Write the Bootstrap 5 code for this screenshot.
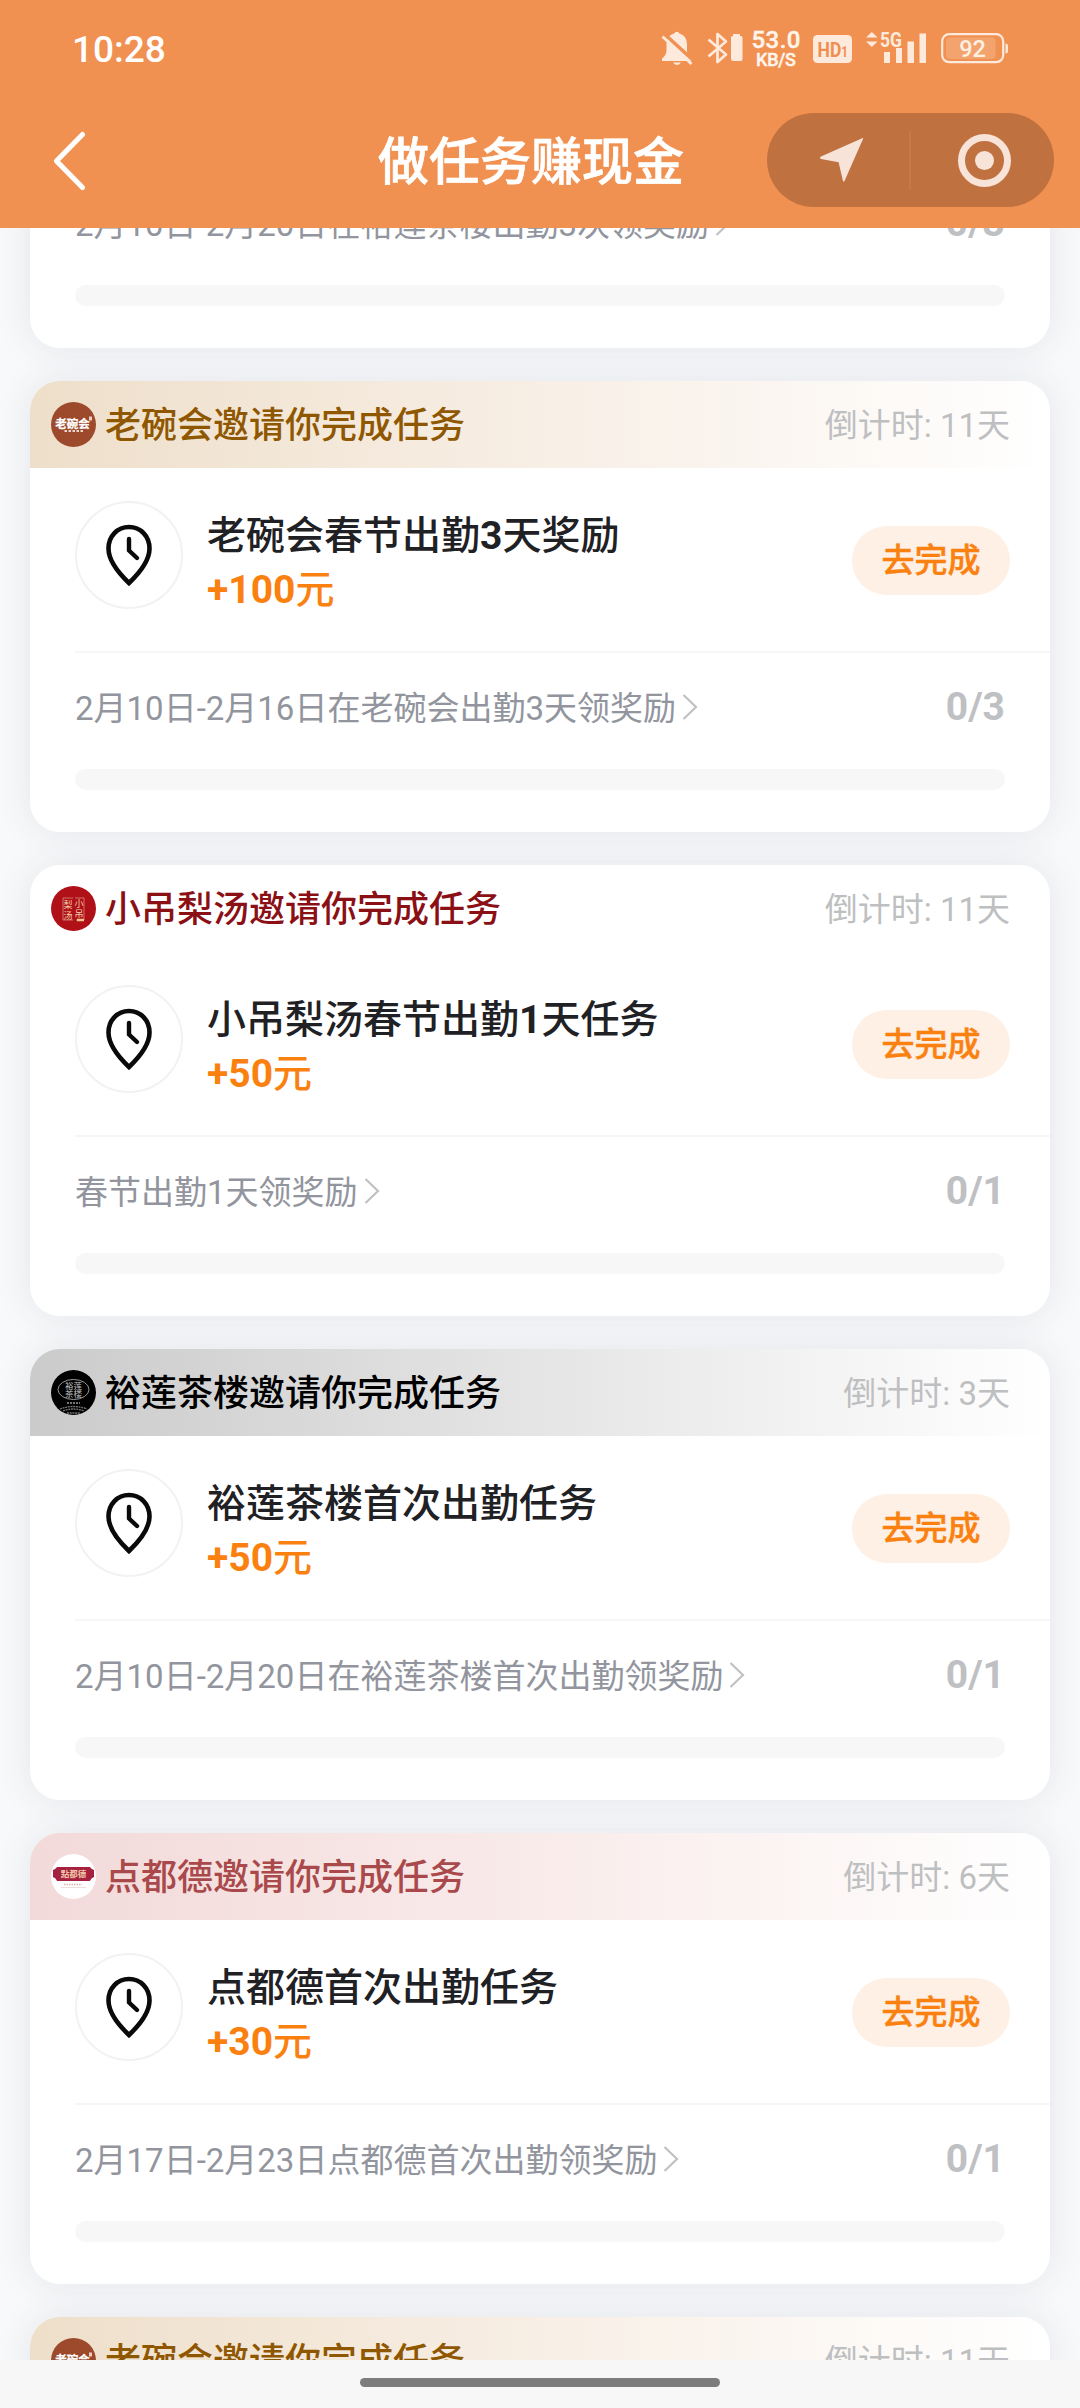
<!DOCTYPE html>
<html lang="zh-CN">
<head>
<meta charset="utf-8">
<meta name="viewport" content="width=device-width, initial-scale=1">
<title>做任务赚现金</title>
<link href="https://cdn.jsdelivr.net/npm/bootstrap@5.3.0/dist/css/bootstrap.min.css" rel="stylesheet">
<style>
  html, body { height: 2408px; overflow: hidden; }
  body { width: 1080px; font-family: Roboto, "Noto Sans CJK SC", sans-serif; background: #f8f9fa; color: #1f2124; }
  svg { display: block; flex: none; overflow: visible; }
  .top-area { height: 228px; background: #f19151; color: #fff; z-index: 2; }
  .status-row { height: 96px; padding: 0 71px 0 72px; }
  .clock { font-size: 37px; font-weight: 500; line-height: 1; padding-top: 2px; }
  .title-row { height: 132px; padding: 0 26px 4px 52px; }
  .page-title { font-size: 51px; font-weight: 500; line-height: 72px; margin: 5px 83px 0 auto; -webkit-text-stroke: .7px #fff; }
  .capsule { width: 287px; height: 94px; border-radius: 47px; background: #c07140; }
  .feed { height: 2132px; }
  .task-list { margin-top: -331px; padding: 0 30px; gap: 33px; }
  .task { flex: none; height: 451px; border-radius: 30px; background: #fff; box-shadow: 0 0 36px rgba(50, 60, 95, .1); }
  .task-in { border-radius: 30px; overflow: hidden; height: 451px; }
  .brand-bar { height: 87px; padding: 0 40px 0 21px; }
  .brand-name { font-size: 36px; font-weight: 500; margin: 3px 0 0 9px; line-height: 87px; }
  .countdown { font-size: 33px; color: #bebfc1; line-height: 87px; margin-top: 2px; }
  .gold { background: linear-gradient(90deg, #eedfca, #f8efe6 52%, #fff); color: #8f5700; }
  .wine { color: #8b1016; }
  .ink { background: linear-gradient(90deg, #cbcbcb, #fff); color: #000; }
  .rose { background: linear-gradient(90deg, #f2dad9, #f9eceb 52%, #fff); color: #a9494b; }
  .task-main { height: 183px; padding: 33px 40px 0 45px; }
  .pin-ring { width: 108px; height: 108px; border: 2px solid #f2f2f3; border-radius: 50%; flex: none; }
  .task-text { margin: 8px 0 0 24px; font-size: 39px; line-height: 54px; font-weight: 500; }
  .task-text b, .reward { font-weight: 700; }
  .reward { color: #fa8110; }
  .reward span { font-weight: 500; }
  .go-btn { width: 158px; height: 69px; margin-top: 25px; border-radius: 35px; background: #fef0e4; color: #fa8110; font-size: 33px; font-weight: 500; line-height: 66px; padding: 0; border: 0; -webkit-text-stroke: .4px #fa8110; }
  .task-more { margin-left: 45px; border-top: 2px solid #f6f6f7; padding-right: 45px; }
  .rule-row { height: 116px; }
  .rule { font-size: 33px; color: #92959d; height: 112px; }
  .rule svg { margin: 0 0 4px 6px; }
  .count { font-size: 39px; font-weight: 700; color: #bfc0c3; line-height: 108px; }
  .meter { height: 21px; border-radius: 11px; background: #f7f7f8; }
  .home-area { height: 48px; background: #f7f7f7; padding-top: 18px; z-index: 2; }
  .home-bar { width: 360px; height: 9px; border-radius: 5px; background: #7d7d7d; }
</style>
</head>
<body>
<svg width="0" height="0" class="position-absolute">
  <defs>
    <symbol id="pin" viewBox="0 0 46 62">
      <path d="M23 3C11.500 3 2.500 12 2.500 24.500C2.500 37 12 48.500 23 59C34 48.500 43.500 37 43.500 24.500C43.500 12 34.500 3 23 3Z" fill="none" stroke="#0a0a0a" stroke-width="4.600"/>
      <path d="M23 15V26.500L31 34" fill="none" stroke="#0a0a0a" stroke-width="4.400" stroke-linecap="round" stroke-linejoin="round"/>
    </symbol>
    <symbol id="more" viewBox="0 0 16 28"><path d="M1.500 2L14 14L1.500 26" fill="none" stroke="#bfc1c5" stroke-width="2.200"/></symbol>
    <symbol id="logo-bowl" viewBox="0 0 45 45">
      <circle cx="22.500" cy="22.500" r="22.500" fill="#9d4a2c"/>
      <text x="21.500" y="25.500" text-anchor="middle" font-size="11.500" font-weight="700" fill="#fff" stroke="#fff" stroke-width=".25" font-family="Noto Sans CJK SC, sans-serif">老碗会</text>
      <rect x="38" y="14.500" width="3" height="4" fill="#e9cfc4"/>
      <path d="M13.500 29H32" stroke="#ecd8cf" stroke-width="2" stroke-dasharray="2.500 1.500"/>
    </symbol>
    <symbol id="logo-pear" viewBox="0 0 45 45">
      <circle cx="22.500" cy="22.500" r="22.500" fill="#b01118"/>
      <path d="M22 12H12V34H22M24 12H33V34H25" fill="none" stroke="#d98c7c" stroke-width=".8"/>
      <g font-size="9" fill="#f0cfae" font-family="Noto Sans CJK SC, sans-serif" text-anchor="middle">
        <text x="17" y="22">梨</text><text x="17" y="33">汤</text><text x="28" y="21">小</text><text x="28" y="31">吊</text>
      </g>
      <path d="M26 34H33" stroke="#f0c48c" stroke-width="2.500"/>
    </symbol>
    <symbol id="logo-tea" viewBox="0 0 45 45">
      <circle cx="22.500" cy="22.500" r="22.500" fill="#000"/>
      <ellipse cx="22.500" cy="19.500" rx="15.500" ry="10" fill="none" stroke="#aaa" stroke-width=".9"/>
      <g font-size="8.500" fill="#c4c4c4" font-family="Noto Sans CJK SC, sans-serif" text-anchor="middle">
        <text x="22.500" y="18.500">裕莲</text><text x="22.500" y="26.500">茶楼</text>
      </g>
      <path d="M16 33H29" stroke="#999" stroke-width="1.500" stroke-dasharray="2 1"/>
      <path d="M9 39Q22.500 34 36 39M12 41Q22.500 37 33 41M16 43H29" fill="none" stroke="#777" stroke-width="1.300" stroke-dasharray="2 .7"/>
    </symbol>
    <symbol id="logo-dim" viewBox="0 0 45 45">
      <circle cx="22.500" cy="22.500" r="22.500" fill="#fff"/>
      <path d="M6 13H39Q40 15 43 16V23Q40 24 39 27H6Q5 24 2 23V16Q5 15 6 13Z" fill="#a5213f"/>
      <text x="22.500" y="23" text-anchor="middle" font-size="8.500" font-weight="700" fill="#f0c9a8" font-family="Noto Sans CJK SC, sans-serif">點都德</text>
      <path d="M13 30.500H31" stroke="#d9b3ab" stroke-width="1.300" stroke-dasharray="1.500 1"/>
      <path d="M10 33.500H35" stroke="#efdedb" stroke-width="1"/>
    </symbol>
  </defs>
</svg>

<div class="d-flex flex-column">
  <header class="top-area position-relative">
    <div class="status-row d-flex align-items-center">
      <div class="clock me-auto">10:28</div>
      <svg width="32" height="35" viewBox="0 0 32 35">
        <path d="M13 2.500Q16 -1 18.500 2.500Q26 5 26 13V21Q27 24.500 31 27.500V30H1V27.500Q5 25 5.500 20V12Q6 5 13 2.500Z" fill="#fdeadd"/>
        <path d="M12 31.500H20Q16 36.500 12 31.500Z" fill="#fdeadd"/>
        <path d="M3.500 3L33.500 30.500" stroke="#f19151" stroke-width="3.500"/>
        <path d="M1.500 5.500L30.500 33" stroke="#fdeadd" stroke-width="2.700"/>
      </svg>
      <svg width="36" height="34" viewBox="0 0 36 34" style="margin-left:14px">
        <path d="M1.500 8.500L19 23.500L10.500 31V3L19 10.500L1.500 25.500" fill="none" stroke="#fdeadd" stroke-width="2.700" stroke-linejoin="round"/>
        <path d="M26 3H33V5H34Q35.500 5 35.500 6.500V28Q35.500 30 34 30H26Q24 30 24 28V6.500Q24 5 26 5Z" fill="#fdeadd"/>
      </svg>
      <svg width="50" height="36" viewBox="0 0 50 36" style="margin-left:8px" font-family="Roboto, sans-serif" font-weight="500" fill="#fff5ec" stroke="#fff5ec" stroke-width=".4">
        <text x="0.500" y="18" font-size="24" textLength="49">53.0</text>
        <text x="5" y="35.500" font-size="18" textLength="40">KB/S</text>
      </svg>
      <svg width="39" height="28" viewBox="0 0 39 28" style="margin-left:12px;margin-top:2px">
        <rect width="39" height="28" rx="4.500" fill="#fdeadd"/>
        <text x="4.500" y="21.500" font-size="21" font-weight="700" fill="#ef8f4f" font-family="Roboto, sans-serif" textLength="30.500" lengthAdjust="spacingAndGlyphs">HD<tspan font-size="14">1</tspan></text>
      </svg>
      <svg width="62" height="34" viewBox="0 0 62 34" style="margin-left:14px">
        <path d="M0 6.500L5.800 1L11.600 6.500ZM0 10.500L5.800 16L11.600 10.500Z" fill="#fdeadd"/>
        <text x="14" y="15.800" font-size="20" font-weight="700" fill="#fdeadd" font-family="Roboto, sans-serif" textLength="22" lengthAdjust="spacingAndGlyphs">5G</text>
        <path d="M18 21h6v11h-6zM30 17h6v15h-6zM41.500 10.500h6.500v21.500h-6.500zM53.500 2.500h6.500v29.500h-6.500z" fill="#fdeadd"/>
      </svg>
      <svg width="68" height="31" viewBox="0 0 68 31" style="margin-left:13px">
        <rect x="1.200" y="1.200" width="61" height="28" rx="7" fill="none" stroke="#fdeadd" stroke-width="2.200"/>
        <rect x="5" y="4.500" width="49.500" height="21.500" rx="4" fill="#fff" opacity=".17"/>
        <path d="M64.500 10.500Q67 10.500 67 13V18Q67 20.500 64.500 20.500Z" fill="#fdeadd"/>
        <text x="31.500" y="24" text-anchor="middle" font-size="23.500" fill="#fff0e2" font-family="Roboto, sans-serif" font-weight="500">92</text>
      </svg>
    </div>
    <div class="title-row d-flex align-items-center">
      <svg width="36" height="58" viewBox="0 0 36 58"><path d="M30.500 3.500L4.500 30L30.500 56.500" fill="none" stroke="#fff" stroke-width="5.200" stroke-linecap="round" stroke-linejoin="round"/></svg>
      <h1 class="page-title">做任务赚现金</h1>
      <div class="capsule">
        <svg width="287" height="94" viewBox="0 0 287 94">
          <path d="M95.700 25Q96.500 24.700 96 26L77.500 68Q76.500 69.500 76 68L71.600 49.300L54 46Q52 45 54 43.500Z" fill="#f7e3d8"/>
          <path d="M143 18V77" stroke="#cb7c4b" stroke-width="1.500"/>
          <circle cx="217.500" cy="47.500" r="23" fill="none" stroke="#f7e3d8" stroke-width="7"/>
          <circle cx="217.500" cy="47.500" r="9.500" fill="#f7e3d8"/>
        </svg>
      </div>
    </div>
  </header>

  <main class="feed overflow-hidden">
    <div class="task-list d-flex flex-column">

      <section class="task"><div class="task-in d-flex flex-column justify-content-end">
        <div class="task-more" style="height:181px">
          <div class="rule-row d-flex justify-content-between">
            <div class="rule d-flex align-items-center">2月10日-2月20日在裕莲茶楼出勤3次领奖励<svg width="16" height="28"><use href="#more"/></svg></div>
            <div class="count">0/3</div>
          </div>
          <div class="meter"></div>
        </div>
      </div></section>

      <section class="task"><div class="task-in">
        <div class="brand-bar gold d-flex align-items-center">
          <svg width="45" height="45"><use href="#logo-bowl"/></svg>
          <div class="brand-name me-auto">老碗会邀请你完成任务</div>
          <div class="countdown">倒计时: 11天</div>
        </div>
        <div class="task-main d-flex align-items-start">
          <div class="pin-ring d-flex align-items-center justify-content-center"><svg width="46" height="62"><use href="#pin"/></svg></div>
          <div class="task-text me-auto">老碗会春节出勤<b>3</b>天奖励<div class="reward">+100<span>元</span></div></div>
          <button class="btn go-btn">去完成</button>
        </div>
        <div class="task-more">
          <div class="rule-row d-flex justify-content-between">
            <div class="rule d-flex align-items-center">2月10日-2月16日在老碗会出勤3天领奖励<svg width="16" height="28"><use href="#more"/></svg></div>
            <div class="count">0/3</div>
          </div>
          <div class="meter"></div>
        </div>
      </div></section>

      <section class="task"><div class="task-in">
        <div class="brand-bar wine d-flex align-items-center">
          <svg width="45" height="45"><use href="#logo-pear"/></svg>
          <div class="brand-name me-auto">小吊梨汤邀请你完成任务</div>
          <div class="countdown">倒计时: 11天</div>
        </div>
        <div class="task-main d-flex align-items-start">
          <div class="pin-ring d-flex align-items-center justify-content-center"><svg width="46" height="62"><use href="#pin"/></svg></div>
          <div class="task-text me-auto">小吊梨汤春节出勤<b>1</b>天任务<div class="reward">+50<span>元</span></div></div>
          <button class="btn go-btn">去完成</button>
        </div>
        <div class="task-more">
          <div class="rule-row d-flex justify-content-between">
            <div class="rule d-flex align-items-center">春节出勤1天领奖励<svg width="16" height="28"><use href="#more"/></svg></div>
            <div class="count">0/1</div>
          </div>
          <div class="meter"></div>
        </div>
      </div></section>

      <section class="task"><div class="task-in">
        <div class="brand-bar ink d-flex align-items-center">
          <svg width="45" height="45"><use href="#logo-tea"/></svg>
          <div class="brand-name me-auto">裕莲茶楼邀请你完成任务</div>
          <div class="countdown">倒计时: 3天</div>
        </div>
        <div class="task-main d-flex align-items-start">
          <div class="pin-ring d-flex align-items-center justify-content-center"><svg width="46" height="62"><use href="#pin"/></svg></div>
          <div class="task-text me-auto">裕莲茶楼首次出勤任务<div class="reward">+50<span>元</span></div></div>
          <button class="btn go-btn">去完成</button>
        </div>
        <div class="task-more">
          <div class="rule-row d-flex justify-content-between">
            <div class="rule d-flex align-items-center">2月10日-2月20日在裕莲茶楼首次出勤领奖励<svg width="16" height="28"><use href="#more"/></svg></div>
            <div class="count">0/1</div>
          </div>
          <div class="meter"></div>
        </div>
      </div></section>

      <section class="task"><div class="task-in">
        <div class="brand-bar rose d-flex align-items-center">
          <svg width="45" height="45"><use href="#logo-dim"/></svg>
          <div class="brand-name me-auto">点都德邀请你完成任务</div>
          <div class="countdown">倒计时: 6天</div>
        </div>
        <div class="task-main d-flex align-items-start">
          <div class="pin-ring d-flex align-items-center justify-content-center"><svg width="46" height="62"><use href="#pin"/></svg></div>
          <div class="task-text me-auto">点都德首次出勤任务<div class="reward">+30<span>元</span></div></div>
          <button class="btn go-btn">去完成</button>
        </div>
        <div class="task-more">
          <div class="rule-row d-flex justify-content-between">
            <div class="rule d-flex align-items-center">2月17日-2月23日点都德首次出勤领奖励<svg width="16" height="28"><use href="#more"/></svg></div>
            <div class="count">0/1</div>
          </div>
          <div class="meter"></div>
        </div>
      </div></section>

      <section class="task"><div class="task-in">
        <div class="brand-bar gold d-flex align-items-center">
          <svg width="45" height="45"><use href="#logo-bowl"/></svg>
          <div class="brand-name me-auto">老碗会邀请你完成任务</div>
          <div class="countdown">倒计时: 11天</div>
        </div>
      </div></section>
    </div>
  </main>

  <footer class="home-area position-relative">
    <div class="home-bar mx-auto"></div>
  </footer>
</div>
<script src="https://cdn.jsdelivr.net/npm/bootstrap@5.3.0/dist/js/bootstrap.bundle.min.js"></script>
</body>
</html>
